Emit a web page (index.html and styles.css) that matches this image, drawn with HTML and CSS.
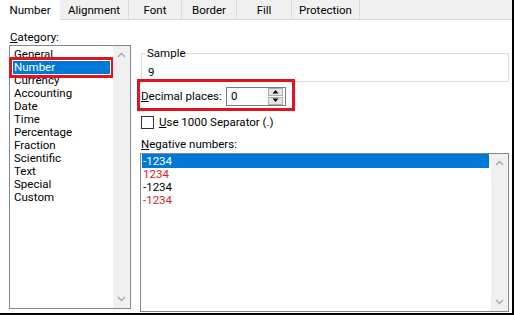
FILE: index.html
```html
<!DOCTYPE html>
<html lang="en">
  <head>
    <meta charset="utf-8">
    <title>Format Cells</title>
    <meta name="viewport" content="width=device-width">
    <link rel="stylesheet" href="styles.css">
  </head>
  <body>
    <div class="dialog">
      <!-- tab strip -->
      <div class="tabs">
        <div class="tab active tab-number">Number</div>
        <div class="tab tab-align">Alignment</div>
        <div class="tab tab-font">Font</div>
        <div class="tab tab-border">Border</div>
        <div class="tab tab-fill">Fill</div>
        <div class="tab tab-prot">Protection</div>
      </div>

      <div class="page">
        <div class="left">
          <div class="label cat-label"><u>C</u>ategory:</div>
          <div class="listbox cat-list">
            <ul class="items">
              <li>General</li>
              <li class="selected marked">Number</li>
              <li>Currency</li>
              <li>Accounting</li>
              <li>Date</li>
              <li>Time</li>
              <li>Percentage</li>
              <li>Fraction</li>
              <li>Scientific</li>
              <li>Text</li>
              <li>Special</li>
              <li>Custom</li>
            </ul>
            <div class="scrollbar">
              <svg width="17" height="12" viewBox="0 0 17 12"><polyline points="5,8 8.5,4.5 12,8" fill="none" stroke="#a6a6a6" stroke-width="1.4"/></svg>
              <svg width="17" height="12" viewBox="0 0 17 12"><polyline points="5,4 8.5,7.5 12,4" fill="none" stroke="#a6a6a6" stroke-width="1.4"/></svg>
            </div>
          </div>
        </div>

        <div class="right">
          <fieldset class="sample">
            <legend>Sample</legend>
            <div class="sample-value">9</div>
          </fieldset>

          <div class="decimal-row">
            <span class="label"><u>D</u>ecimal places:</span>
            <div class="spin-input">
              <span class="spin-value">0</span>
              <div class="spin-buttons">
                <div class="spin-btn"><svg width="9" height="5" viewBox="0 0 9 5"><polygon points="1.5,4.5 4.5,1 7.5,4.5" fill="#000"/></svg></div>
                <div class="spin-btn"><svg width="9" height="5" viewBox="0 0 9 5"><polygon points="1.5,0.5 4.5,4 7.5,0.5" fill="#000"/></svg></div>
              </div>
            </div>
          </div>

          <div class="check-row">
            <span class="checkbox"></span>
            <span class="label"><u>U</u>se 1000 Separator (.)</span>
          </div>

          <div class="label neg-label"><u>N</u>egative numbers:</div>
          <div class="listbox neg-list">
            <ul class="items">
              <li class="selected">-1234</li>
              <li class="red">1234</li>
              <li>-1234</li>
              <li class="red">-1234</li>
            </ul>
            <div class="scrollbar">
              <svg width="17" height="12" viewBox="0 0 17 12"><polyline points="5,8 8.5,4.5 12,8" fill="none" stroke="#a6a6a6" stroke-width="1.4"/></svg>
              <svg width="17" height="12" viewBox="0 0 17 12"><polyline points="5,4 8.5,7.5 12,4" fill="none" stroke="#a6a6a6" stroke-width="1.4"/></svg>
            </div>
          </div>
        </div>
      </div>
    </div>
  </body>
</html>
```

FILE: styles.css
```css
body {
  margin: 0;
  padding: 0;
  background-color: #000;
  font-family: Roboto, "Liberation Sans", sans-serif;
  font-size: 11.5px;
  color: #000;
}

.dialog {
  width: 512px;
  height: 313px;
  background-color: #fff;
  display: flex;
  flex-direction: column;
}

/* tab strip */
.tabs {
  display: flex;
  height: 19px;
  background-color: #f0f0f0;
  border-bottom: 1px solid #d9d9d9;
}

.tab {
  box-sizing: border-box;
  height: 20px;
  line-height: 21px;
  text-align: center;
  border-right: 1px solid #d9d9d9;
}

.tab.active {
  background-color: #fff;
  border-right: none;
}

.tab-number { width: 60px; }
.tab-align { width: 69px; }
.tab-font { width: 53px; }
.tab-border { width: 55px; }
.tab-fill { width: 55px; }
.tab-prot { width: 68px; }

.page {
  display: flex;
  flex: 1;
  padding: 0 3px 0 9px;
  gap: 9px;
}

.label {
  line-height: 14px;
  white-space: nowrap;
}

.left {
  width: 122px;
  display: flex;
  flex-direction: column;
}

.cat-label {
  margin: 10px 0 1px 1px;
}

.listbox {
  display: flex;
  border: 1px solid #828790;
  background-color: #fff;
}

.cat-list {
  height: 262px;
}

.items {
  list-style: none;
  margin: 0;
  padding: 2px 0 0 0;
  flex: 1;
}

.items li {
  line-height: 13px;
  margin: 0 3px;
  padding-left: 1px;
}

.items li.selected {
  background-color: #0078d7;
  color: #fff;
}

.items li.marked {
  outline: 3px solid #e0141e;
  outline-offset: 1px;
}

.items li.red {
  color: #d02424;
}

.scrollbar {
  width: 17px;
  background-color: #f0f0f0;
  display: flex;
  flex-direction: column;
  justify-content: space-between;
  padding: 3px 0;
}

/* right side */
.right {
  flex: 1;
  display: flex;
  flex-direction: column;
}

.sample {
  margin: 26px 0 0 1px;
  padding: 0 6px 2px 6px;
  border: 1px solid #dcdcdc;
  min-width: 0;
}

.sample legend {
  padding: 0;
  margin-left: -1px;
  line-height: 14px;
}

.sample-value {
  line-height: 14px;
  margin-top: 5px;
}

.decimal-row {
  display: flex;
  align-items: center;
  width: 151px;
  height: 26px;
  margin: -3px 0 0 -3px;
  padding: 0 0 0 1px;
  border: 3px solid #e0141e;
}

.decimal-row .label {
  width: 85px;
  margin-top: 2px;
}

.spin-input {
  display: flex;
  align-items: center;
  justify-content: space-between;
  box-sizing: border-box;
  width: 60px;
  height: 19px;
  margin-top: 2px;
  padding: 0 2px 0 4px;
  border: 1px solid #7a7a7a;
}

.spin-buttons {
  display: flex;
  flex-direction: column;
  gap: 1px;
}

.spin-btn {
  box-sizing: border-box;
  width: 15px;
  height: 8px;
  background-color: #e5e5e5;
  border: 1px solid #adadad;
  display: flex;
  align-items: center;
  justify-content: center;
}

.check-row {
  display: flex;
  align-items: center;
  gap: 5px;
  margin-top: 4px;
  margin-left: 1px;
}

.checkbox {
  box-sizing: border-box;
  width: 13px;
  height: 13px;
  border: 1px solid #333;
}

.neg-label {
  margin: 8px 0 2px 1px;
}

.neg-list {
  height: 157px;
}

.neg-list .items {
  padding-top: 0;
}

.neg-list .items li {
  margin: 0 2px 0 1px;
}

.neg-list .items li.selected {
  line-height: 14px;
}
```
